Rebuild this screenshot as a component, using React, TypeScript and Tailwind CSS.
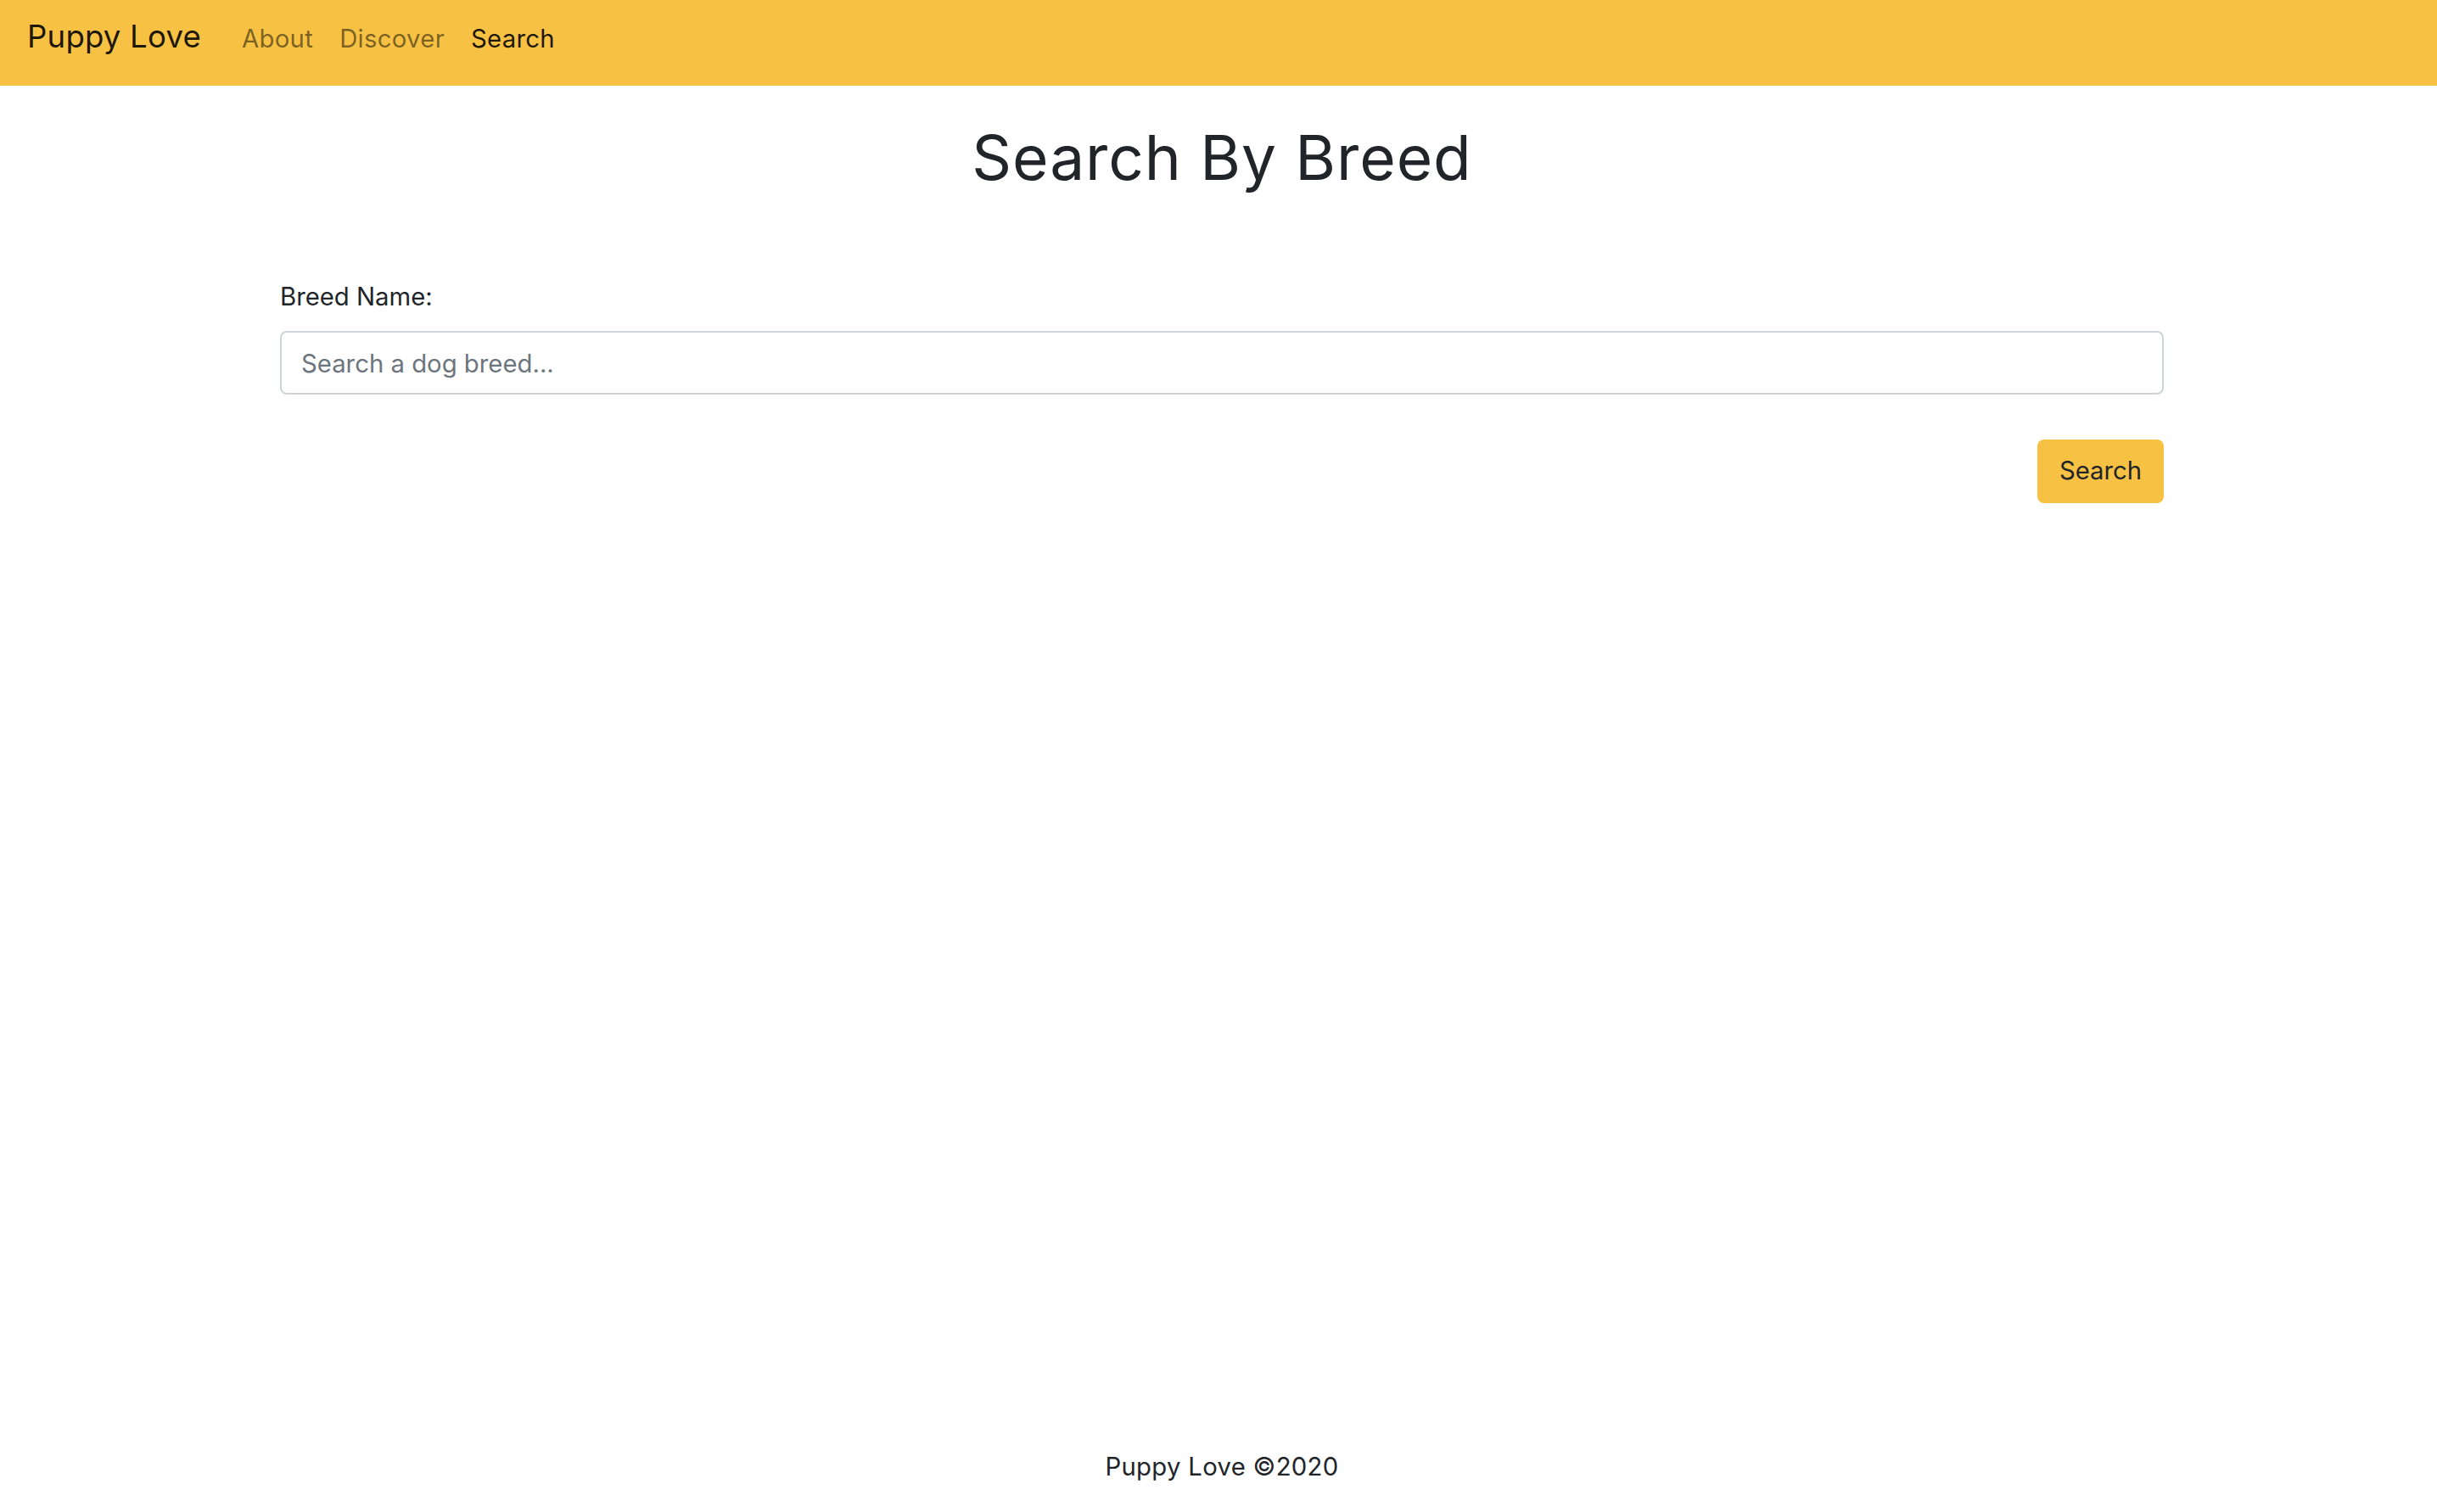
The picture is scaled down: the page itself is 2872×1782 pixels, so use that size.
import { useState } from "react"

export default function App() {
  const [query, setQuery] = useState("")

  return (
    <div
      className="min-h-screen flex flex-col bg-white text-[#212529]"
      style={{ fontFamily: "Inter, 'Open Sans', sans-serif" }}
    >
      {/* Navbar */}
      <nav className="h-[101px] bg-[#f7c244] flex items-baseline pt-[25px] pl-[32px]">
        <a href="#" className="text-[36.6px] leading-none tracking-[0.2px] text-black/90 mr-[48px]">
          Puppy Love
        </a>
        <div className="flex items-baseline gap-[31px] text-[29.3px] leading-none tracking-[0.3px]">
          <a href="#" className="text-black/50">
            About
          </a>
          <a href="#" className="text-black/50">
            Discover
          </a>
          <a href="#" className="text-black/90">
            Search
          </a>
        </div>
      </nav>

      {/* Search form */}
      <main className="flex-1 pl-[330px] pr-[322px]">
        <h1 className="mt-[41px] text-center text-[73px] leading-[1.2] font-normal tracking-[0.9px]">
          Search By Breed
        </h1>

        <form className="mt-[98px]" onSubmit={(e) => e.preventDefault()}>
          <label className="block text-[29.3px] leading-[1.5] mb-[18px]">Breed Name:</label>
          <input
            value={query}
            onChange={(e) => setQuery(e.target.value)}
            placeholder="Search a dog breed..."
            className="w-full h-[75px] px-[23px] pt-[2px] text-[29.3px] border-2 border-[#ced4da] rounded-[8px] outline-none placeholder:text-[#6c757d]"
          />
          <div className="flex justify-end mt-[53px]">
            <button
              type="submit"
              className="h-[75px] w-[149px] bg-[#f7c244] rounded-[8px] text-[29.3px] text-[#212529]"
            >
              Search
            </button>
          </div>
        </form>
      </main>

      <footer className="pl-[330px] pr-[322px] pb-[31px] text-center text-[29.3px] leading-[1.5] tracking-[0.3px]">
        Puppy Love ©2020
      </footer>
    </div>
  )
}
